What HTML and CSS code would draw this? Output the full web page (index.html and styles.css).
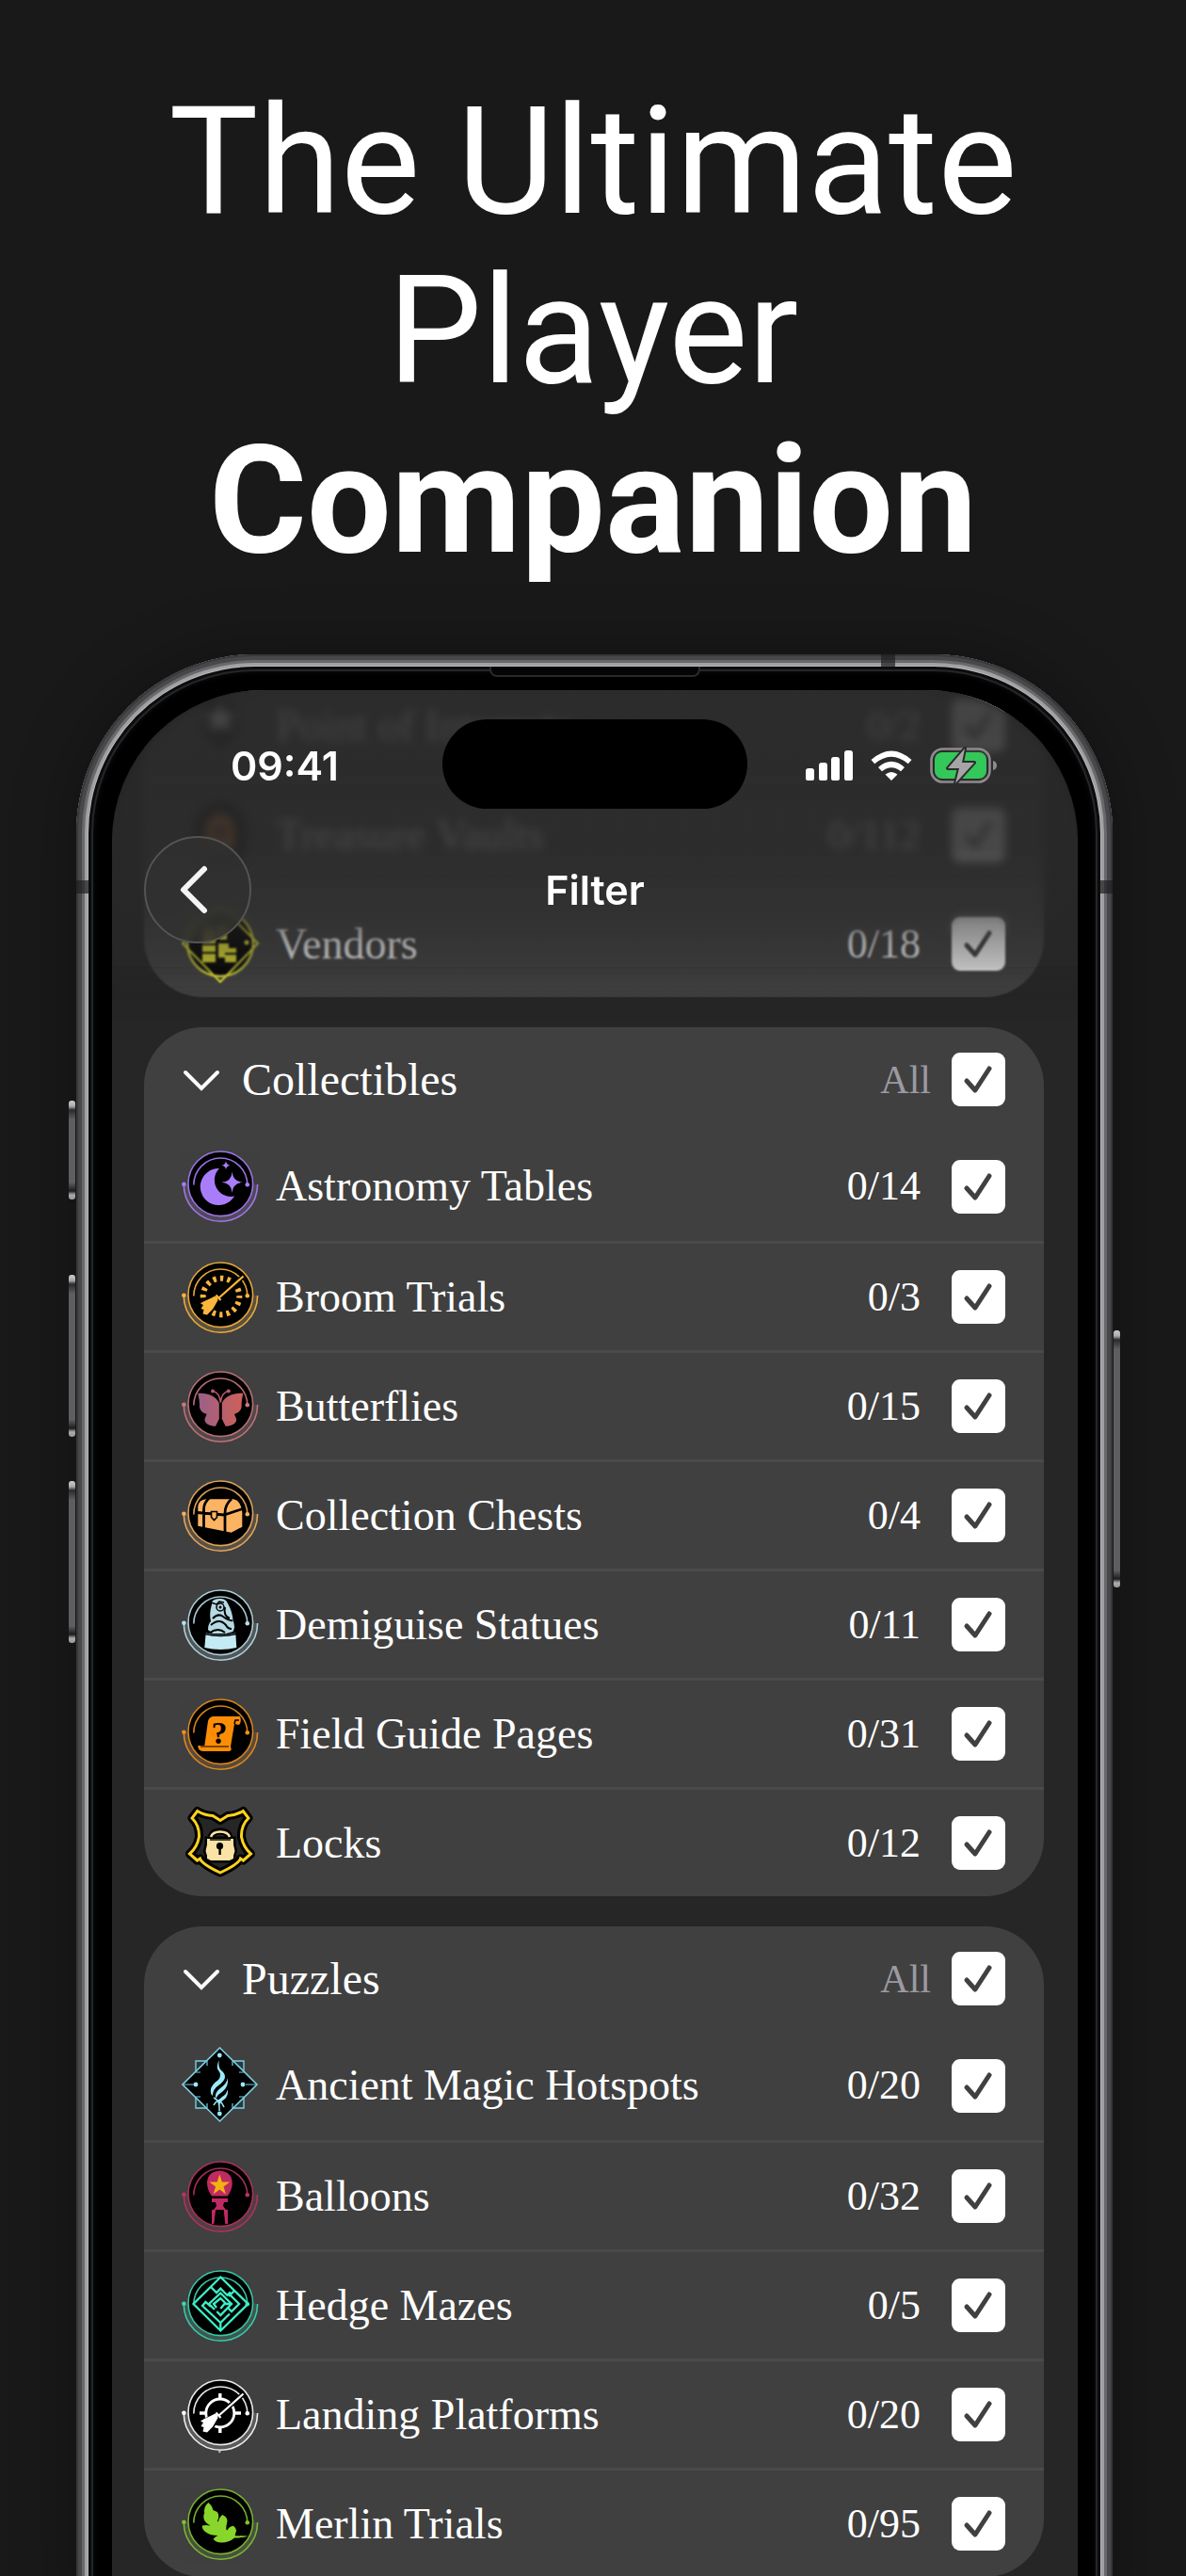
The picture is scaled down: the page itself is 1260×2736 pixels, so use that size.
FILE: index.html
```html
<!DOCTYPE html>
<html lang="en">
<head>
  <meta charset="UTF-8" />
  <meta name="viewport" content="width=device-width, initial-scale=1.0" />
  <title>The Ultimate Player Companion</title>
  <link rel="stylesheet" href="styles.css">
</head>
<body>
  <!-- shared icon parts -->
  <svg class="sprite" aria-hidden="true">
    <symbol id="ring" viewBox="0 0 82 82">
      <path d="M2 39a39.3 39.3 0 0 0 78.6 0h-4.8a34.5 34.5 0 0 1-69 0z" fill="currentColor" opacity=".14"/>
      <circle cx="41.3" cy="38.3" r="34.3" fill="#000"/>
      <g fill="none" stroke="currentColor" stroke-width="1.6" opacity=".9">
        <circle cx="41.3" cy="38.3" r="34.3"/>
        <path d="M12.8 39.5a28.5 28.5 0 0 1 57 0"/>
        <path d="M2.2 39a39.2 39.2 0 0 0 78.4 0"/>
      </g>
      <circle cx="2.4" cy="38.8" r="2.3" fill="currentColor"/>
      <circle cx="69.8" cy="39.3" r="2.3" fill="currentColor"/>
    </symbol>
    <symbol id="broom" viewBox="0 0 82 82">
      <path d="M65 19L40 41" fill="none" stroke="#000" stroke-width="5"/>
      <path d="M38.5 40l-3-1.500L20 47l-2 7 3 8h8l11-16z" fill="#000"/>
      <path d="M65.500 18.500L39 42M36.500 38.500l5 5.500" fill="none" stroke="currentColor" stroke-width="2.200"/>
      <path d="M38 41l-2.500-1.500c-5 3-10 4-15.500 8l3 1.500-2.500 4 3 1-1 4.500 4.500 1 6-6 5.500-9.500z" fill="currentColor"/>
    </symbol>
  </svg>

  <h1>The Ultimate Player <strong>Companion</strong></h1>

  <main class="phone">
    <span class="side-btn action"></span>
    <span class="side-btn vol-up"></span>
    <span class="side-btn vol-down"></span>
    <span class="side-btn power"></span>
    <span class="band band-top"></span>
    <span class="band band-left"></span>
    <span class="band band-right"></span>
    <span class="earpiece"></span>

    <div class="screen">
      <div class="list">
        <section class="card">
          <label class="row">
            <svg class="icon" viewBox="0 0 82 82"><path d="M24 18q17-8 34 0v34L41 66 24 52z" fill="#111"/><path d="M41 17l5 11h12l-9 8 3 12-11-7-11 7 3-12-9-8h12z" fill="#fff"/></svg>
            <span class="name">Point of Interests</span>
            <span class="count">0/2</span>
            <input type="checkbox" checked>
          </label>
          <label class="row">
            <svg class="icon" viewBox="0 0 82 82"><ellipse cx="41" cy="40" rx="29" ry="36" fill="#111"/><path d="M26 56V34q2-14 15-16 13 2 15 16v22z" fill="#d07838"/><circle cx="41" cy="38" r="8" fill="#6b3b1c"/></svg>
            <span class="name">Treasure Vaults</span>
            <span class="count">0/112</span>
            <input type="checkbox" checked>
          </label>
          <label class="row">
            <svg class="icon" viewBox="0 0 82 82"><circle cx="41" cy="40" r="33" fill="#000"/><g fill="none" stroke="#e6e430" stroke-width="2"><circle cx="41" cy="40" r="35"/><path d="M41 0l40 40-40 41L1 40z"/></g><path d="M23 24h12v6l-2 3h3v27H22V33h3zM40 20h8v16h-8zM39 40h11v5h8v15H46v-5h-7z" fill="#e6e430"/><path d="M22 41h14M22 50h14M46 51h12" stroke="#000" stroke-width="2"/><circle cx="69" cy="39" r="2.500" fill="#e6e430"/></svg>
            <span class="name">Vendors</span>
            <span class="count">0/18</span>
            <input type="checkbox" checked>
          </label>
        </section>

        <section class="card">
          <div class="card-head">
            <button class="toggle" type="button"><svg class="chevron" viewBox="0 0 42 42"><path d="M4 13l17 17 17-17"/></svg>Collectibles</button>
            <label class="all">All <input type="checkbox" checked></label>
          </div>
          <label class="row">
            <svg class="icon" viewBox="0 0 82 82" color="#a97dfa">
              <use href="#ring"/>
              <path d="M40 22A19.500 19.500 0 1 0 56 51.500 17.500 17.500 0 0 1 40 22z" fill="currentColor"/>
              <path d="M53.700 25.500q.7 10.500 11.300 11.300-10.600.8-11.300 11.300-.7-10.500-11.300-11.300 10.600-.8 11.300-11.300zM47 14q.4 4.200 4.600 4.700-4.200.5-4.600 4.700-.4-4.200-4.600-4.700 4.200-.5 4.600-4.700z" fill="currentColor"/>
            </svg>
            <span class="name">Astronomy Tables</span>
            <span class="count">0/14</span>
            <input type="checkbox" checked>
          </label>
          <label class="row">
            <svg class="icon" viewBox="0 0 82 82" color="#fdb63c">
              <use href="#ring"/>
              <circle cx="42" cy="40" r="19.300" fill="none" stroke="currentColor" stroke-width="6" stroke-dasharray="3.400 4.180" stroke-dashoffset="1.700"/>
              <use href="#broom"/>
            </svg>
            <span class="name">Broom Trials</span>
            <span class="count">0/3</span>
            <input type="checkbox" checked>
          </label>
          <label class="row">
            <svg class="icon" viewBox="0 0 82 82" color="#c9797f">
              <defs><linearGradient id="wing" x1="0" x2="1"><stop offset="0" stop-color="#9a6088"/><stop offset="1" stop-color="#cf6058"/></linearGradient></defs>
              <use href="#ring"/>
              <path d="M17.300 27c9-1 20 3 22.500 10.500L41.300 36l1.500 1.500C45.300 30 56.300 26 65.300 27c-.7 4.200-1.700 7.200-1.700 12.200.5 4.500-2.500 8.500-7.500 9.500 0 2 1.700 3 2 6 .5 4-5.500 7-11.500 7L42.800 54h-3L36 61.700c-6 0-12-3-11.500-7 .3-3 2-4 2-6-5-1-8-5-7.500-9.500 0-5-1-8-1.700-12.200z" fill="url(#wing)"/>
              <path d="M41.300 37c-.5-6-3-11.500-8.300-12.500M41.300 37c.5-6 3-11.500 8.300-12.500" fill="none" stroke="#b45c6c" stroke-width="1.400"/>
              <circle cx="33" cy="24.500" r="2" fill="#b45c6c"/><circle cx="49.800" cy="24.500" r="2" fill="#b45c6c"/>
              <path d="M41.300 38v15" stroke="#000" stroke-width="3" stroke-linecap="round"/>
            </svg>
            <span class="name">Butterflies</span>
            <span class="count">0/15</span>
            <input type="checkbox" checked>
          </label>
          <label class="row">
            <svg class="icon" viewBox="0 0 82 82" color="#f3b163">
              <use href="#ring"/>
              <path d="M17.300 31q1-7 8.700-7.700h29q8 2 9.300 13.400v16l-11.600 6-35.400-7z" fill="#fdb462"/>
              <path d="M16 37.500l29 2.500 20-6.500M23.500 54V34q0-7 6-12M46 59V38q0-9 7-15" fill="none" stroke="#000" stroke-width="2.800"/>
              <path d="M31.500 36.500h6v6l-3 3-3-3z" fill="#fdb462" stroke="#000" stroke-width="1.600"/>
            </svg>
            <span class="name">Collection Chests</span>
            <span class="count">0/4</span>
            <input type="checkbox" checked>
          </label>
          <label class="row">
            <svg class="icon" viewBox="0 0 82 82" color="#b9dfe9">
              <use href="#ring"/>
              <path d="M25.700 49.500q16 4 31.600 0l1 15.500q-17 4-34 0z" fill="#c4eaf4"/>
              <path d="M32 17q1-4 9-4 6 0 8 5 5 9 5.500 18 3 7 0 12l-7 2H33l-5-4q0-6 3-9-2-8 1-18z" fill="#b5dae4"/>
              <path d="M33 34q6-6 11-2 7 5 10 4M31 41q9-8 16 0 2 4 6 4M30 49q9-6 16 0M46 22q-2 9 5 12" fill="none" stroke="#000" stroke-width="2"/>
              <path d="M31 17l6 2 3-3 5 1" fill="none" stroke="#000" stroke-width="1.500"/>
              <circle cx="41" cy="22" r="4" fill="#b5dae4" stroke="#000" stroke-width="1.500"/><circle cx="41" cy="22" r="1.500"/>
              <path d="M25 50.500q16 4 33 0" fill="none" stroke="#000" stroke-width="1.500"/>
            </svg>
            <span class="name">Demiguise Statues</span>
            <span class="count">0/11</span>
            <input type="checkbox" checked>
          </label>
          <label class="row">
            <svg class="icon" viewBox="0 0 82 82" color="#ee8f1d">
              <use href="#ring"/>
              <path d="M33 22h29q2 6-1 9l-5-1-4 24q2 5-2 5H24q-7 0-6.700-6h7l3.700-26q1-4 5-5z" fill="#fd8d05"/>
              <path d="M56 30l1-4h4" fill="none" stroke="#000" stroke-width="1.500"/>
              <path d="M20 54h30" stroke="#000" stroke-width="1.200"/>
              <text class="mark" x="40" y="51">?</text>
            </svg>
            <span class="name">Field Guide Pages</span>
            <span class="count">0/31</span>
            <input type="checkbox" checked>
          </label>
          <label class="row">
            <svg class="icon" viewBox="0 0 82 82">
              <path d="M16.700 6.500Q24 11 33 11.500l8 5 8-5Q58 11 65.300 6.500L71 14q-8 8-7.500 20 2 11 10 18l-8 7-3-2q-2 6-21.500 15Q21.500 63 19.500 57l-3 2-8-7q8-7 10-18Q19 22 11 14z" fill="#262626" stroke="#000" stroke-width="9" stroke-linejoin="round"/>
              <path d="M16.700 6.500Q24 11 33 11.500l8 5 8-5Q58 11 65.300 6.500L71 14q-8 8-7.500 20 2 11 10 18l-8 7-3-2q-2 6-21.500 15Q21.500 63 19.500 57l-3 2-8-7q8-7 10-18Q19 22 11 14z" fill="none" stroke="#fdd31c" stroke-width="3"/>
              <path d="M27 36h28v6l1.500 7-1.500 5v3l-4 2H31l-4-2v-3l-1.500-5 1.500-7z" fill="#fbe3a6" stroke="#000" stroke-width="5" paint-order="stroke"/>
              <path d="M31 34q2-6 10-6t10 6" fill="none" stroke="#000" stroke-width="7"/>
              <path d="M31 34q2-5.500 10-5.500T51 34" fill="none" stroke="#fbe3a6" stroke-width="2.600"/>
              <path d="M30 37h22" stroke="#000" stroke-width="1.500"/>
              <circle cx="40.500" cy="43.700" r="3.600"/><path d="M39.400 44h2.400v9h-2.400z"/>
            </svg>
            <span class="name">Locks</span>
            <span class="count">0/12</span>
            <input type="checkbox" checked>
          </label>
        </section>

        <section class="card">
          <div class="card-head">
            <button class="toggle" type="button"><svg class="chevron" viewBox="0 0 42 42"><path d="M4 13l17 17 17-17"/></svg>Puzzles</button>
            <label class="all">All <input type="checkbox" checked></label>
          </div>
          <label class="row">
            <svg class="icon" viewBox="0 0 82 82" color="#7dcfe2">
              <path d="M15 15h51v50H15z" fill="#27393d" stroke="currentColor" stroke-width="1.400"/>
              <path d="M40.500 1L80 40 40.500 79 1 40z" fill="#000" stroke="currentColor" stroke-width="1.600"/>
              <path d="M15 27h5M27 15v5M66 27h-5M54 15v5M15 53h5M27 65v-5M66 53h-5M54 65v-5M1 40h12M80 40H68" stroke="currentColor" stroke-width="1.200"/>
              <g fill="#9beafb"><circle cx="40.300" cy="9" r="2.400"/><circle cx="15" cy="40" r="2.400"/><circle cx="65" cy="40" r="2.400"/><circle cx="40.300" cy="71" r="2.400"/>
              <path d="M40 14q-4 7-1 11 4 5 0 10-7 5-8 10-1 5 2 7 0-7 6-11 7-5 7-9 0-4-4-7-4-4-2-11zM49 33q-1 6-8 11-6 4-5 11 3-5 8-8 6-5 5-14zM49 45q-1 5-6 8-5 4-3 9 1-4 5-6 5-4 4-11z"/></g>
              <path d="M34 54q6 3 6 9v5M46 54q-10 3-12 8M38 57q4 0 7 7" fill="none" stroke="#9beafb" stroke-width="1.500"/>
            </svg>
            <span class="name">Ancient Magic Hotspots</span>
            <span class="count">0/20</span>
            <input type="checkbox" checked>
          </label>
          <label class="row">
            <svg class="icon" viewBox="0 0 82 82" color="#b93263">
              <use href="#ring"/>
              <path d="M40.300 13.500q13 1 13.500 13 0 7-5 14H32q-5-7-5-14 .5-12 13.300-13zM32 43h17v4h-4l-1 4 3 4h2v15h-2l-2-15h-9l-2 15h-2V55h2l3-4-1-4h-4z" fill="#c02a62"/>
              <path d="M40.300 17.500l2.600 8h8.200l-6.600 5 2.500 8-6.700-5-6.700 5 2.500-8-6.600-5h8.200z" fill="#f2b311"/>
              <path d="M35 55l-1.500 15M45.500 55L47 70" stroke="#c02a62" stroke-width="1.500"/>
            </svg>
            <span class="name">Balloons</span>
            <span class="count">0/32</span>
            <input type="checkbox" checked>
          </label>
          <label class="row">
            <svg class="icon" viewBox="0 0 82 82" color="#38d9b4">
              <use href="#ring"/>
              <g fill="none" stroke="#3cf0c8" stroke-width="2.300">
                <path d="M41.300 10.500L70.500 39 41.300 67.500 12.500 39z"/>
                <path d="M31 21l6 6 4.300-4.300 7 7 3.500-3.500M50 28l11 11-8 8-4-4M31 42l-5.500-5L22 41l19.300 18L51 49.500M41.300 59v8M56 25l-6 6"/>
                <path d="M35 45l-6-6 12.300-11.500L53 39 41.300 51l-4-4M37 43l-3-4 7.300-6 5 5-5 6M46 39h7"/>
              </g>
            </svg>
            <span class="name">Hedge Mazes</span>
            <span class="count">0/5</span>
            <input type="checkbox" checked>
          </label>
          <label class="row">
            <svg class="icon" viewBox="0 0 82 82" color="#fff">
              <use href="#ring"/>
              <g fill="none" stroke="currentColor" stroke-width="2.800"><circle cx="40.800" cy="39" r="15"/><path d="M40.800 18v6M40.800 54v6M19 39h7M56 39h7" stroke-width="3.400"/></g>
              <use href="#broom"/>
              <circle cx="40.300" cy="80" r="1.200" fill="#bbb"/>
            </svg>
            <span class="name">Landing Platforms</span>
            <span class="count">0/20</span>
            <input type="checkbox" checked>
          </label>
          <label class="row">
            <svg class="icon" viewBox="0 0 82 82" color="#80c234">
              <use href="#ring"/>
              <path d="M28.300 18q4 3 5 8l4.500 2q3 4 0 9.500l1 1q1-5 4.500-7.500 6 3 5 7.500-1 4-1 8l1 1q2-4 6.700-4.800 4 3 2.700 6.600-1 2-1 4l13.500.2q-4 2-14 2-6 5-14 5-5 0-8.700-3.500 2-3 5-4-8 0-12-3-5-3-4.800-7.500 4-1 9 0-6-3-7-7-1-3 .5-6.500Q23 23 28.300 18z" fill="#88d62c"/>
            </svg>
            <span class="name">Merlin Trials</span>
            <span class="count">0/95</span>
            <input type="checkbox" checked>
          </label>
        </section>
      </div>

      <!-- translucent bar over the scrolled list -->
      <header class="topbar">
        <div class="status">
          <time>09:41</time>
          <div class="status-icons">
            <svg class="signal" viewBox="0 0 50 32"><path d="M0 22q0-3 3-3h3q3 0 3 3v8q0 2-2 2H2q-2 0-2-2zM14 16q0-3 3-3h3q3 0 3 3v14q0 2-2 2h-5q-2 0-2-2zM27 10q0-3 3-3h3q3 0 3 3v20q0 2-2 2h-5q-2 0-2-2zM41 3q0-3 3-3h3q3 0 3 3v27q0 2-2 2h-5q-2 0-2-2z" fill="#fff"/></svg>
            <svg class="wifi" viewBox="0 0 44 32"><path d="M22 32l-6.500-6.500q6.500-5 13 0zM.5 10Q22-9 43.500 10l-3.700 4.200q-17.800-15-35.600 0zM8 18q14-12.500 28 0l-4 4.300q-10-8.300-20 0z" fill="#fff"/></svg>
            <svg class="battery" viewBox="0 0 72 40"><rect x="1.500" y="2.500" width="62" height="35" rx="12" fill="none" stroke="#8e8a8e" stroke-width="2.600"/><rect x="5" y="6" width="55" height="28" rx="8" fill="#34c759"/><path d="M67 15q4 1 4 5t-4 5z" fill="#8e8a8e"/><path d="M37 2L19 23h12l-4 16 20-22H34z" fill="#a5a5a7" stroke="#2b2b2b" stroke-width="4" stroke-linejoin="round" paint-order="stroke"/></svg>
          </div>
        </div>
        <nav class="nav">
          <button class="back" type="button" aria-label="Back"><svg viewBox="0 0 40 56"><path d="M30 6L8 28l22 22"/></svg></button>
          <h2>Filter</h2>
        </nav>
      </header>
      <span class="island"></span>
    </div>
  </main>
</body>
</html>
```
FILE: styles.css
```css
* {
  box-sizing: border-box;
}
body {
  margin: 0;
  height: 100vh;
  display: flex;
  flex-direction: column;
  overflow: hidden;
  background: #191919;
  color: #fff;
  font-family: Roboto, "Liberation Sans", sans-serif;
}
.sprite {
  position: absolute;
  width: 0;
  height: 0;
}
h1 {
  margin: 0;
  padding: 82px 100px 73px;
  font-size: 159px;
  line-height: 180px;
  font-weight: 400;
  text-align: center;
}
h1 strong {
  font-weight: 700;
}

/* phone body, metal rings from outside in; the bottom runs off the page */
.phone {
  position: relative;
  flex: 1;
  min-height: 0;
  display: flex;
  margin: 0 78px -40px 81px;
  padding: 38px 37px 0 38px;
  border-radius: 190px 190px 0 0;
  background: #000;
  box-shadow: inset 0 0 0 2px #38383b,
    inset 0 0 0 6px #48484b,
    inset 0 0 0 9px #69696c,
    inset 0 0 0 12px #a0a0a3,
    inset 0 0 0 13px #b8b8ba,
    inset 0 0 0 16px #0b0c0d,
    inset 0 0 0 18px #242628,
    inset 0 0 6px 18px #101112,
    0 0 70px rgba(0, 0, 0, 0.3);
}
.side-btn {
  position: absolute;
  width: 7px;
  border-radius: 3px;
  background: linear-gradient(#ccc 0, #aaa 6px, #2a2a2c 10px, #5e5e60 20px, #5e5e60 calc(100% - 18px), #1c1c1e calc(100% - 9px), #aaa calc(100% - 5px), #999 100%);
}
.action {
  left: -8px;
  top: 474px;
  height: 105px;
}
.vol-up {
  left: -8px;
  top: 659px;
  height: 172px;
}
.vol-down {
  left: -8px;
  top: 878px;
  height: 172px;
}
.power {
  right: -8px;
  top: 718px;
  height: 273px;
}
.band {
  position: absolute;
  background: rgba(30, 30, 32, 0.7);
}
.band-top {
  top: 0;
  right: 231px;
  width: 15px;
  height: 13px;
}
.band-left,
.band-right {
  top: 240px;
  width: 13px;
  height: 14px;
}
.band-left {
  left: 0;
}
.band-right {
  right: 0;
}
.earpiece {
  position: absolute;
  top: 13px;
  left: 50%;
  width: 224px;
  height: 11px;
  transform: translateX(-50%);
  border: 2px solid #2a2a2a;
  border-top: 0;
  border-radius: 0 0 8px 8px;
  background: #050505;
}

.screen {
  position: relative;
  flex: 1;
  overflow: hidden;
  border-radius: 160px 160px 0 0;
  background: #262626;
}
.list {
  display: flex;
  flex-direction: column;
  gap: 32px;
  margin-top: -22px;
  padding: 0 36px 0 34px;
}
.card {
  border-radius: 62px;
  background: #404040;
  overflow: hidden;
  flex-shrink: 0;
}
.card:first-child {
  border-radius: 0 0 62px 62px;
}
.card-head {
  display: flex;
  align-items: center;
  justify-content: space-between;
  height: 111px;
  padding: 0 41px 0 40px;
}
.toggle {
  display: flex;
  align-items: center;
  gap: 22px;
  padding: 0;
  border: 0;
  background: none;
  color: #fff;
  font: 48px/56px "Liberation Serif", serif;
}
.chevron {
  width: 42px;
  height: 42px;
  fill: none;
  stroke: #fff;
  stroke-width: 4;
  stroke-linecap: round;
}
.all {
  display: flex;
  align-items: center;
  gap: 22px;
  color: #9b9aa0;
  font: 42px/56px "Liberation Serif", serif;
}
.row {
  display: flex;
  align-items: center;
  height: 116px;
  padding: 0 41px 0 40px;
  border-top: 3px solid #4a4a4a;
  font: 46px/56px "Liberation Serif", serif;
}
.card-head + .row {
  border-top: 0;
}
.icon {
  width: 82px;
  height: 82px;
  margin-right: 18px;
}
.mark {
  fill: #000;
  font: bold 34px "Liberation Serif", serif;
  text-anchor: middle;
}
.name {
  flex: 1;
}
.count {
  margin-right: 33px;
  font-size: 44px;
}
input[type="checkbox"] {
  appearance: none;
  width: 57px;
  height: 57px;
  margin: 0;
  border-radius: 9px;
  background: #fff url("data:image/svg+xml,%3Csvg xmlns='http://www.w3.org/2000/svg' viewBox='0 0 57 57'%3E%3Cpath d='M16 30l9 10 15-23' fill='none' stroke='%23404040' stroke-width='5' stroke-linecap='round' stroke-linejoin='round'/%3E%3C/svg%3E");
}

/* status and navigation bar */
.topbar {
  position: absolute;
  top: 0;
  left: 0;
  right: 0;
  height: 350px;
  padding-top: 52px;
}
.topbar::before,
.topbar::after {
  content: "";
  position: absolute;
  inset: 0;
}
.topbar::before {
  backdrop-filter: blur(5px);
  -webkit-mask-image: linear-gradient(#000 55%, transparent 76%);
  mask-image: linear-gradient(#000 55%, transparent 76%);
}
.topbar::after {
  backdrop-filter: blur(1px);
  background: linear-gradient(rgba(41, 41, 41, 0.88) 0, rgba(41, 41, 41, 0.86) 48%, rgba(41, 41, 41, 0.58) 70%, rgba(41, 41, 41, 0.28) 86%, rgba(41, 41, 41, 0) 100%);
  -webkit-mask-image: linear-gradient(#000 84%, transparent);
  mask-image: linear-gradient(#000 84%, transparent);
}
.status,
.nav {
  position: relative;
  z-index: 1;
}
.status {
  display: flex;
  align-items: center;
  justify-content: space-between;
  height: 56px;
  padding: 0 85px 0 126px;
  font: 600 43px/54px Inter, sans-serif;
}
.status-icons {
  display: flex;
  align-items: center;
  gap: 19px;
}
.signal {
  width: 50px;
  height: 32px;
}
.wifi {
  width: 44px;
  height: 32px;
}
.battery {
  width: 72px;
  height: 40px;
}
.nav {
  display: grid;
  grid-template-columns: 114px 1fr 114px;
  align-items: center;
  margin-top: 47px;
  padding: 0 34px;
}
.back {
  width: 114px;
  height: 114px;
  padding: 0;
  border: 2px solid #545454;
  border-radius: 50%;
  background: rgba(49, 49, 49, 0.8);
  backdrop-filter: blur(4px);
}
.back svg {
  width: 40px;
  height: 56px;
  margin-right: 6px;
  vertical-align: middle;
  fill: none;
  stroke: #f4f4f4;
  stroke-width: 6;
  stroke-linecap: round;
  stroke-linejoin: round;
}
h2 {
  margin: 0;
  font: 600 43px/54px Inter, sans-serif;
  text-align: center;
}
.island {
  position: absolute;
  top: 31px;
  left: 50%;
  width: 324px;
  height: 95px;
  transform: translateX(-50%);
  border-radius: 48px;
  background: #000;
}
```
